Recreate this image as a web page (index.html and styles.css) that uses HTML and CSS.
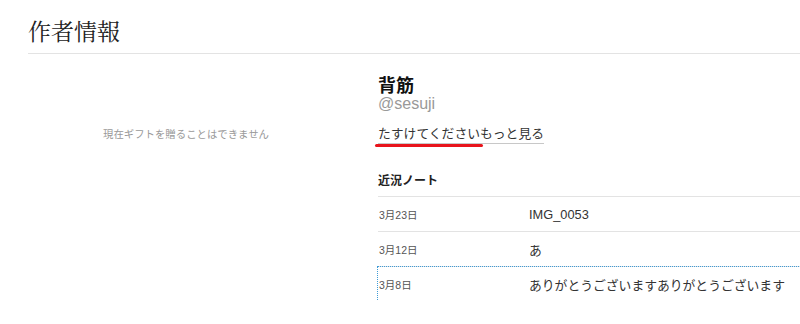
FILE: index.html
```html
<!DOCTYPE html>
<html lang="ja">

<head>
    <meta charset="UTF-8">
    <title>作者情報</title>
    <link rel="stylesheet" href="styles.css">
</head>

<body>
    <div class="page">
        <h2 class="section-title">作者情報</h2>

        <div class="author">
            <div class="gift">
                <p class="gift-note">現在ギフトを贈ることはできません</p>
            </div>

            <div class="profile">
                <div class="name">背筋</div>
                <div class="handle">@sesuji</div>
                <a class="more" href="#"><span class="marked">たすけてください</span>もっと見る</a>

                <div class="notes">
                    <h3 class="notes-title">近況ノート</h3>
                    <a class="note" href="#">
                        <span class="note-date">3月23日</span>
                        <span class="note-text">IMG_0053</span>
                    </a>
                    <a class="note" href="#">
                        <span class="note-date">3月12日</span>
                        <span class="note-text">あ</span>
                    </a>
                    <a class="note focused" href="#">
                        <span class="note-date">3月8日</span>
                        <span class="note-text">ありがとうございますありがとうございます</span>
                    </a>
                </div>
            </div>
        </div>
    </div>
</body>

</html>
```

FILE: styles.css
```css
body {
    margin: 0;
    overflow: hidden;
    background: #fff;
    font-family: "Liberation Sans", "Noto Sans CJK JP", sans-serif;
    color: #222;
}

.page {
    padding-left: 28px;
}

.section-title {
    margin: 0;
    padding: 21px 0 9px;
    font-family: "Liberation Serif", "Noto Serif CJK JP", "Noto Sans CJK JP", serif;
    font-size: 23px;
    font-weight: normal;
    line-height: 23px;
    color: #222;
    border-bottom: 1px solid #e3e3e3;
}

.author {
    display: grid;
    grid-template-columns: 316px 440px;
    column-gap: 34px;
}

/* 左側：ギフト */
.gift {
    padding-top: 75px;
    text-align: center;
}

.gift-note {
    margin: 0;
    font-size: 10.4px;
    line-height: 12px;
    color: #999;
}

/* 右側：プロフィール */
.profile {
    padding-top: 23px;
}

.name {
    font-size: 18px;
    font-weight: bold;
    line-height: 18px;
    color: #111;
}

.handle {
    font-size: 16px;
    line-height: 18px;
    color: #999;
}

.more {
    display: inline-block;
    margin-top: 14px;
    padding-bottom: 3px;
    font-size: 12.8px;
    line-height: 13px;
    color: #333;
    text-decoration: none;
    border-bottom: 1px solid #c8c8c8;
}

.marked {
    position: relative;
}

/* 赤い手書き線 */
.marked::after {
    content: "";
    position: absolute;
    left: -3px;
    right: -3px;
    bottom: -6px;
    height: 3px;
    border-radius: 2px;
    background: #e8141c;
}

.notes {
    margin-top: 31px;
}

.notes-title {
    margin: 0;
    padding-bottom: 9px;
    font-size: 12px;
    line-height: 12px;
    color: #222;
    border-bottom: 1px solid #e3e3e3;
}

.note {
    display: flex;
    align-items: center;
    height: 34px;
    color: #333;
    text-decoration: none;
    border-bottom: 1px solid #e3e3e3;
}

.note.focused {
    border-bottom: none;
    outline: 1px dotted #3f9bd6;
}

.note-date {
    width: 150px;
    padding-left: 1px;
    font-size: 10.5px;
    color: #555;
}

.note-text {
    font-size: 12.8px;
    color: #333;
}
```
